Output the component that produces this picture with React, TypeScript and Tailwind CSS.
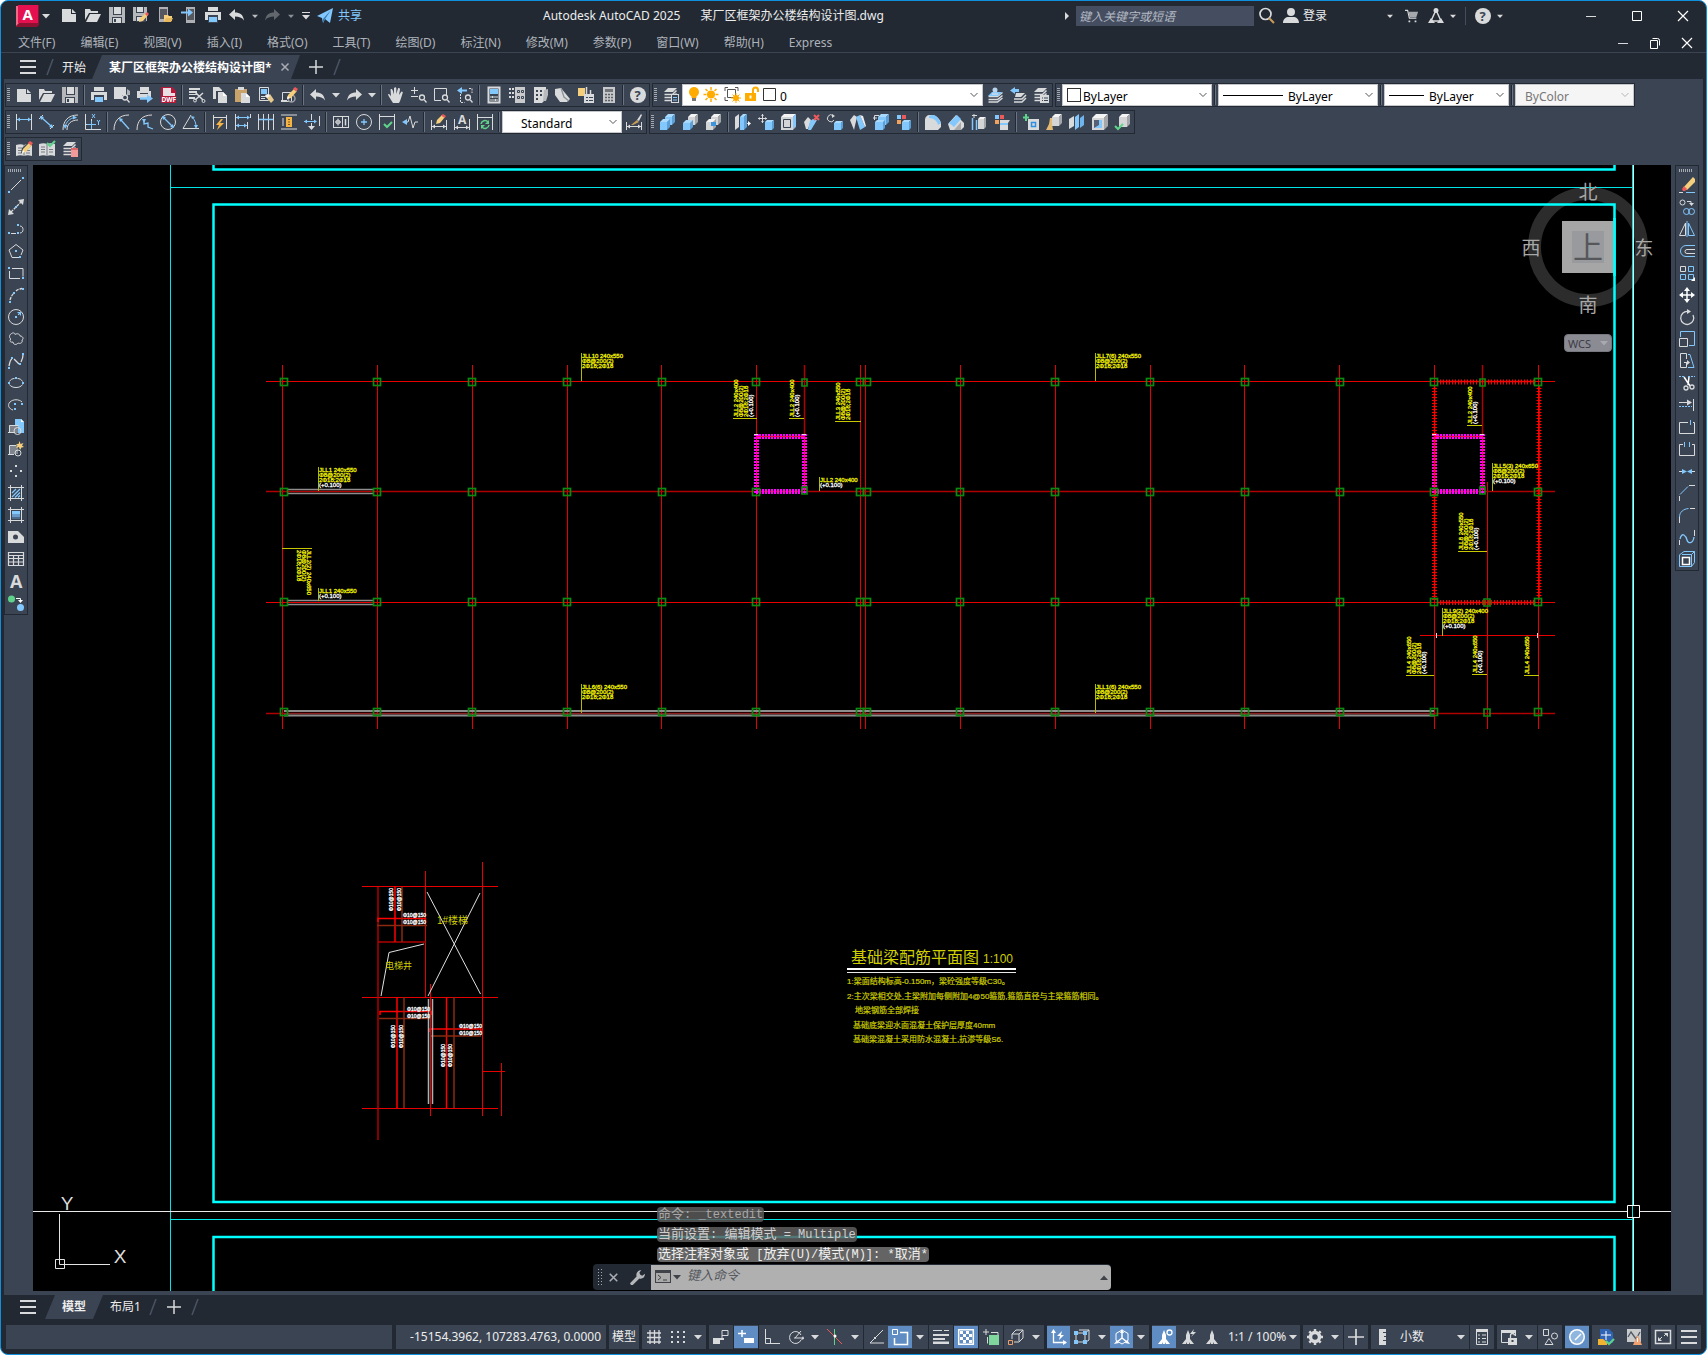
import React from "react";

/* ---------- icon primitives ---------- */

const W = "#d9dadb";
const B = "#83c8fd";
const G = "#9a9da3";
const BG = "#3b4453";
const Y = "#f6cf7d";
const R = "#ee5a5a";
const GR = "#5fd38a";

type Shape = { d?: string; c: string; w: number; t?: string; x?: number; y?: number; s?: number; dash?: string };
const S = (d: string, c = W, w = 1, dash?: string): Shape => ({ d, c, w, dash });
const F = (d: string, c = W): Shape => ({ d, c, w: 0 });
const T = (t: string, x: number, y: number, s: number, c = W): Shape => ({ t, x, y, s, c, w: 0 });
const dot = (x: number, y: number, c = B) => F(`M${x - 1} ${y - 1}h2v2h-2z`, c);

const cube = (x: number, y: number, w: number, h: number, d: number, blue = false): Shape[] => {
  const [f, t, s] = blue ? ["#83c8fd", "#a9d9fd", "#5b9fd6"] : ["#d4d5d6", "#f4f4f4", "#a4a6a9"];
  return [
    F(`M${x} ${y + d}h${w}v${h}h${-w}z`, f),
    F(`M${x} ${y + d}l${d} ${-d}h${w}l${-d} ${d}z`, t),
    F(`M${x + w} ${y + d}l${d} ${-d}v${h}l${-d} ${d}z`, s),
  ];
};
const pencil: Shape[] = [F("M6 12l1-4 6-6 3 2-6 7z", Y), F("M12 2l2-2 3 2-2 2.500z", R), F("M6 12l.8-3 2 2z", "#fff")];
const sheets: Shape[] = [F("M5 1h9l-4 4H1z"), S("M1.500 7.500h8l4-4M1.500 10.500h8l4-4M1.500 13.500h8l4-4", W, 1.5)];
const magnifier: Shape[] = [S("M8.500 10.500a2.500 2.500 0 1 0 5 0a2.500 2.500 0 1 0-5 0M13 12.500l2.500 3", W, 1.3)];
const redUp: Shape[] = [F("M1 1h4v4H1z", B), F("M6 1h4v4H6z", R), F("M1 6h4v4H1z", "#f3a25b")];
const anno: Shape[] = [F("M8 1l2 5v4l4 5h-4l-1-2v2H7v-2l-1 2H2l4-5V6z")];

const icons: Record<string, Shape[]> = {
  new: [F("M1 2h9v5h5v8H1z"), F("M11 2l4 4h-4z")],
  open: [F("M0 13V2h5l1 2h7v2H4z"), F("M5 7h11l-4 8H1z")],
  save: [F("M0 0h16v16H0z", "#b6b8bb"), F("M4 0h9v8H4z", BG), F("M5 0h7v7H5z"), F("M3 10h10v6H3z", BG), F("M4 11h8v5H4z"), F("M5 12h2v3H5z", BG)],
  saveAs: [F("M0 0h14v14H0z", "#b6b8bb"), F("M3 0h8v6H3z", BG), F("M4 0h6v5H4z"), F("M3 9h10v6H3z", BG), F("M4 10h6v4H4z"), F("M6 15l1-4 6-5 2 2-5 6z", Y), F("M12 7l2-2 2 2-2 2z", R)],
  openPhone: [F("M2 0h9v15H2z", "#aeb0b3"), F("M3 2h7v10H3z", "#55585e"), F("M7 8h4l1 1h3v5H7z", Y), F("M9 11h7l-2 4H7z", "#e8b85d")],
  savePhone: [F("M5 0h9v16H5z", "#aeb0b3"), F("M6 2h7v11H6z", "#55585e"), S("M0 5.500h8", B, 2), F("M7 1.500l5 4-5 4z", B)],
  print: [F("M3 0h10v4H3z"), F("M0 5h16v8H0z"), F("M3 8h10v1H3z", BG), F("M3 9h10v7H3z", BG), F("M4 10h8v5H4z", B)],
  undo: [F("M0 7.500L6 2v3.500c5 0 8 2 9 8-2-3-5-4-9-4V13z")],
  redo: [F("M16 7.500L10 2v3.500c-5 0-8 2-9 8 2-3 5-4 9-4V13z")],
  plane: [F("M0 8L16 0l-3 15-5-4-2 4-1-5z", B), F("M6 11l8-9-6 9-2 4z", "#3478ad")],
  preview: [F("M0 0h12v8H0z"), F("M3 8h5v4H0V8z"), ...magnifier, F("M13 2l3 2v4h-3z", "#b0b3b6")],
  publish: [F("M3 0h9v4H3z"), F("M0 4h14v7H0z"), F("M3 6h8v1H3z", BG), S("M3 11.500h9", B, 2.5), F("M10 7.500l6 4-6 4.500z", B)],
  dwf: [F("M1 0h11l4 4v12H1z", "#b8173a"), F("M3 1h8v5h4v3H3z", "#eadfe2"), T("DWF", 1.5, 15, 6.5, "#fff")],
  cut: [F("M0 1h11v2H0zM0 4h8v2H0zM0 7h9v1H0zM0 10h6v2H0z"), S("M6 5l8 8M14 6l-8 7", W, 1.5), S("M4.500 13.500a1.500 1.500 0 1 0 3 0a1.500 1.500 0 1 0-3 0M13 14a1.500 1.500 0 1 0 3 0a1.500 1.500 0 1 0-3 0")],
  copy: [F("M1 0h6l3 3v1H4v8H1z"), F("M6 5h5l4 4v7H6z"), F("M11 5l4 4h-4z", "#fff")],
  paste: [F("M0 2h12v4H7v9H0z", "#c9a36a"), F("M3 0h6v3H3z"), F("M6 6h5l4 4v6H6z"), F("M11 6l4 4h-4z", "#fff")],
  match: [S("M1.500 .5h9v13h-9z"), F("M3 2h6v5H3z", B), S("M3 9.500h6M3 11.500h4"), F("M8 10l4-3 4 6-3 3z", "#e8c98d"), F("M7 8l3-1 2 2-3 2z", "#f1f1f1")],
  blockEdit: [S("M1.500 14.500v-9h9v9z"), F("M0 13h6v2H0z"), S("M7 11.500a3.500 3.500 0 1 0 7 0a3.500 3.500 0 1 0-7 0", G, 1.5), ...pencil],
  pan: [F("M5 16C3 13 1 10 0 7.500c1-1 2 0 3 2L2.500 2.500c1-1 2 0 2.300 1L6 7.500V1c1-1 2-1 2.300 0v6L10 1.500c1-1 2 0 2 1L11 8l2.500-3.500c1.500 0 1.500 1 1 2-1 3-2 7-3.500 9.500z")],
  zoomRt: [S("M3.500 0v7M0 3.500h7M0 9.500h7"), ...magnifier],
  zoomWin: [S("M.5 1.500h12v12H.5z"), F("M7 8h9v8H7z", BG), ...magnifier],
  zoomPrev: [S("M3.500 7v8.500h4M12 1.500h3V6", W, 1, "2 1"), F("M0 3.500L5 0v2.500h5v2H5V7z", B), ...magnifier],
  props: [S("M2.500 .5h11v15h-11z", W, 2), F("M4 2h8v5H4z", B), S("M4 10h8M4 13h8M6.500 9v2M9.500 12v2")],
  dcenter: [F("M0 1h2v2H0zM0 5h2v2H0zM0 9h2v2H0zM3 1h2v2H3zM3 5h2v2H3zM3 9h2v2H3z"), F("M6 0h10v16H6z", "#c9cacc"), S("M8.500 3.500h2v2h-2zM12.500 3.500h2v2h-2zM8.500 9.500h2v2h-2zM12.500 9.500h2v2h-2z", BG)],
  palettes: [F("M2 0h12v12l-4 4H2z"), F("M4 3h2v2H4zM8 3h2v2H8zM4 7h2v2H4zM8 7h2v2H8zM4 11h2v2H4z", BG), F("M12 3l4-1v6l-2 6h-3z", "#b8babd")],
  sheets: [F("M0 2l6-1 9 11-3 3H5L0 8z"), S("M6 1l3 9 5 4", "#8e9196", 1.3)],
  markup: [F("M0 1h7v8H0z", Y), S("M8.500 0v8M12.500 3v5", W, 1.5), F("M6 7h10v9H6z"), S("M8 10.500h2M11 10.500h4M8 13.500h2M11 13.500h4", BG)],
  calc: [F("M2 0h12v16H2z", "#c7c8ca"), F("M4 2h8v3H4z", "#72757b"), S("M4 7.500h8M4 10.500h8M4 13.500h8", "#5b5f67", 1.5, "2 1")],
  help: [F("M0 8a8 8 0 1 0 16 0a8 8 0 1 0-16 0"), T("?", 4.5, 12.5, 13, "#3b4453")],
  layerProps: [...sheets, F("M8 7h8v9H8z"), F("M9 8h6v7H9z", BG), S("M10 10.500h4M10 13h4", B)],
  layerCur: [S("M1.500 9.500h9l5-4M1.500 12.500h9l5-4M1.500 15h9l5-4", W, 1.5), F("M5 5h10l-4 4H1z", B), F("M5.500 3a2.500 2.500 0 1 0 5 0a2.500 2.500 0 1 0-5 0M5 6h6v2H5z", "#b9d6ee")],
  layerPrev: [F("M0 3.500L5 0v2h4v3H5v2z", B), F("M6 6h9l-4 4H5z"), S("M4 12h8l4-4M4 15h8l4-4", W, 1.5)],
  layerStates: [...sheets, F("M7 8h9v8H7z"), S("M9 11h1M11 11h4M9 13.500h1M11 13.500h4", BG)],
  dLinear: [S("M.5 0v16M15.500 0v16"), S("M1 5.500h14", B), F("M1 5.500l3-2v4zM15 5.500l-3-2v4z", B)],
  dAligned: [S("M0 5l4-4M11 15l4-4"), S("M3 4l9 8", B, 1.3), F("M1 2l4 1-3 3zM14 14l-4-1 3-3z", B)],
  dArc: [S("M1 16C1 7 6 1 16 1M5 16c0-6 4-10 11-10"), S("M3 13C4 8 8 4 13 3.500", B), F("M15 3.500l-4-2v4zM3 15l-1.500-4h4z", B)],
  dOrd: [S("M.5 0v15.500H16M6.500 5v10M1 10.500h8"), S("M6.500 7v8M2 10.500h9", B), S("M7 0l3 4M10 0L7 4M12 6l1.500 2L15 6M13.500 8v3", B)],
  dRadius: [S("M0 16C0 7 5 1 15 1"), S("M7 6l8 9", B, 1.3), F("M5 4l4 1-3 3z", B)],
  dJog: [S("M0 16C0 7 5 1 15 1"), S("M7 6v4l4-1v4l5 2", B, 1.3), F("M5 5l4 0-2 4z", B)],
  dDia: [S("M.5 8a7.500 7.500 0 1 0 15 0a7.500 7.500 0 1 0-15 0"), S("M3 3l10 10", B, 1.3), F("M2 2l4 1-3 3zM14 14l-4-1 3-3z", B)],
  dAng: [S("M8 1L0 14.500h16"), S("M9 3c3 3 4 6 4 10", B), F("M8 2l4 1-3 2zM13 15l-2-4h4z", B)],
  dQuick: [S("M1.500 1v14M14.500 1v14M2 3.500h12"), F("M9 5L4 11h3l-2 5 7-7H8l3-4z", "#f5b445")],
  dBase: [S("M.5 0v16M15.500 0v4M12.500 8v7"), S("M1 3.500h13M1 11.500h11", B), F("M15 3.500l-3-2v4zM12 11.500l-3-2v4zM1 3.500l3-2v4zM1 11.500l3-2v4z", B)],
  dCont: [S("M.5 0v16M5.500 0v16M10.500 0v16M15.500 0v16"), S("M1 5.500h14", B, 1.5)],
  dSpace: [S("M0 1h16M0 15h16M2 4v8"), F("M5 3h6v10H5z", "#f5b445"), S("M7 5.500h2M7 8h2M7 10.500h2", "#7a5a20")],
  dBreak: [S("M7.500 0v6M7.500 9v6M15.500 2v10"), S("M0 7.500h12", B), F("M0 7.500l3-2v4zM13 7.500l-3-2v4z", B), F("M4 12h7l-3.500 4z")],
  tol: [F("M0 2h16v12H0z"), F("M1 3h8v10H1zM10 3h5v10h-5z", BG), S("M2 8h6M5 4.500v7M3 8a2 2 0 1 0 4 0a2 2 0 1 0-4 0"), S("M12.500 5v6.500", W, 1.5)],
  center: [S("M.5 8a7.500 7.500 0 1 0 15 0a7.500 7.500 0 1 0-15 0"), S("M5 8h6M8 5v6", B, 1.3)],
  inspect: [S("M.5 0v16M15.500 0v16M1 2.500h14"), S("M5 10l3 3 5-5", GR, 2)],
  jogline: [S("M4 8h2l2-6 3 12 2-6h3"), F("M0 8l5-3v6z", B)],
  dEdit: [S("M.5 6v10M15.500 6v10M1 12.500h14"), F("M1 12.500l3-2v4zM15 12.500l-3-2v4z"), F("M5 10l1-4 5-5 3 2-5 6z", Y), F("M10 1.500L12 0l3 2-1.500 2z", R)],
  dText: [S("M.5 5v11M15.500 5v11M1 13.500h14"), F("M1 13.500l3-2v4zM15 13.500l-3-2v4z"), T("A", 4, 10, 12)],
  dUpdate: [S("M.5 0v16M15.500 0v16M1 3.500h14"), S("M4 10a4 4 0 0 1 7-2M12 11a4 4 0 0 1-7 2", GR, 1.5), F("M12 6v4H8zM4 15v-4h4z", GR)],
  dStyle: [S("M.5 8v8M15.500 8v8M1 12.500h14"), F("M1 12.500l3-2v4zM15 12.500l-3-2v4z"), F("M5 11l6-5 2 2-6 3z", "#c79b5a"), F("M11 6l4-6 1 1-3 6z")],
  union: [...cube(5, 0, 7, 8, 3, true), ...cube(0, 5, 7, 8, 3, true)],
  subtract: [...cube(5, 0, 7, 8, 3), ...cube(0, 6, 7, 7, 3, true)],
  intersect: [...cube(5, 0, 7, 8, 3), ...cube(0, 5, 7, 8, 3), F("M5 8h5v4H5z", "#3a95dd")],
  extrude: [F("M0 3l4-3v13l-4 3z"), ...cube(5, 0, 4, 13, 3, true), S("M12 9.500h3"), F("M13 7l3 2.500-3 2.500z", "#fff")],
  moveF: [S("M4.500 0v9M0 4.500h9"), F("M3 2h3L4.500 0zM3 7h3L4.500 9zM2 3v3L0 4.500zM7 3v3l2-1.500z"), ...cube(7, 6, 7, 8, 2, true)],
  offsetF: [...cube(0, 0, 12, 13, 3), S("M2.500 5.500h7v8h-7z", BG), F("M12 3l3-3v12l-3 3z", B)],
  deleteF: [F("M0 8l4-5 3 3-3 9H2z"), F("M6 7l3-2 4 1-6 10H4z", B), S("M10 1l5 5M15 1l-5 5", R, 2)],
  rotateF: [S("M6 1.500A3.500 3.500 0 1 0 7 6"), F("M5 0l3 2-3 2z"), ...cube(7, 7, 7, 7, 2, true)],
  taperF: [F("M0 6l4-5 3 2-3 13z"), F("M6 3l4-2 5 12-5 3z", B), F("M10 1l3 1 3 10-1 1z", "#eee")],
  copyF: [...cube(5, 0, 8, 8, 3, true), S("M1.500 6V1.500H6M0 4h4"), ...cube(2, 6, 8, 8, 2, true)],
  colorF: [...redUp, ...cube(6, 6, 7, 8, 2, true)],
  filletE: [F("M0 16V6c0-3 2-5 5-5h3c4 1 8 5 8 9v3l-3 3z"), F("M4 2c3-2 7-1 9 2l3 5-3 2c-1-4-4-7-9-7z", B)],
  chamferE: [F("M0 10L8 1l8 8v4l-3 3H2z"), F("M1 9l8-8 4 4-7 8z", B), F("M6 16l7-8v8z", "#aaa")],
  copyE: [S("M1.500 16V4M5.500 16V6", B, 1.5), S("M1 1.500h5M3 0v4"), ...cube(7, 3, 6, 10, 2)],
  colorE: [...redUp, F("M6 6h10l-2 3H6z"), F("M6 9h8v2H6z", B), F("M6 11h8v5H6z")],
  imprint: [S("M3 0v7M0 3.500h6", GR, 2), F("M5 5h11v11H5z"), S("M8.500 8.500h4v4h-4z", "#2f8fe0", 1.5)],
  clean: [...cube(6, 0, 7, 9, 3), F("M4 4l-1 6-3 6h7l-1-6V4z", "#e3b873")],
  separate: [F("M0 5l5-3v10l-5 3z"), F("M6 3l4-3v13l-4 3z", B), F("M11 4l4-3v10l-4 3z", "#6eb5ee")],
  shell: [...cube(0, 0, 12, 12, 4), F("M2 6h8v8H2z", "#566173"), F("M2 14l5-3V6h3v8z", B)],
  check: [...cube(4, 0, 8, 10, 3), S("M0 12l3 3 5-5", GR, 2)],
  attEdit: [F("M0 4c3-1 6-1 8 0 2-1 5-1 8 0v11c-3-1-6-1-8 0-2-1-5-1-8 0z"), S("M2 7h4M2 9.500h4M2 12h4M10 9.500h4M10 12h4M8 4v11", "#777b82"), F("M5 12l1-5 7-6 3 3-7 7z", "#3b4453"), ...pencil],
  attSync: [F("M0 3c3-1 6-1 8 0 2-1 5-1 8 0v12c-3-1-6-1-8 0-2-1-5-1-8 0z"), S("M2 6h4M2 8.500h4M2 11h4M10 8.500h4M10 11h4M8 3v12", "#777b82"), S("M8 2l3 3 5-5", GR, 2)],
  layerBook: [...sheets, F("M9 7h7v9H9z", "#f29a9a"), F("M9 7h7v2H9z", "#d66")],

  line: [S("M3 13L13 3"), dot(1, 15), dot(15, 1)],
  xline: [S("M3 13L13 3", W, 1.3, "3 1"), F("M0 16l1-6 5 5zM16 0l-6 1 5 5z"), dot(8, 8)],
  pline: [S("M3 12.500h5M12 5c4 0 4 7 0 7"), dot(1, 12), dot(10, 4), dot(10, 12)],
  polygon: [S("M11 14.500H4L1 7l7-5.500L15 7l-2 5"), dot(8, 8), dot(12, 14)],
  rect: [S("M4 3.500h11v8M12 13.500H1.500V6"), dot(1, 3), dot(15, 13)],
  arc: [S("M2 13c1-3 2-5 4-7M8 4c2-2 4-2 6-2.500", W, 1.3, "3 1"), dot(2, 15), dot(6, 6), dot(15, 2)],
  circle: [S("M.5 8a7.500 7.500 0 1 0 15 0a7.500 7.500 0 1 0-15 0"), S("M10 6l2-2", B), F("M13 3v4l-4-4z", B), dot(8, 8)],
  cloud: [S("M3 3c2-2 4-1 4 .5C9 2 12 3 12 5c3 0 4 3 2 4 1 3-2 4-4 3-1 2-5 2-5-1-3 1-4-2-2-3-2-1-2-4 0-5z")],
  spline: [S("M1 13c1-5 2-7 3-7M6 6l5 5M13 9c1-2 2-4 2-7", W, 1.3), dot(1, 15), dot(4, 5), dot(12, 11), dot(15, 1)],
  ellipse: [S("M1.500 6.500c1-2 3-3 5-3M9.500 3.500c2 0 4 1 5 3M1.500 9.500c2 4 11 4 13 0"), dot(8, 3), dot(1, 8), dot(15, 8)],
  earc: [S("M5 13C1 12-1 8 2 5s9-3 12 0"), dot(7, 7), dot(14, 7), dot(7, 12)],
  insert: [F("M7 0h6l3 3v11H7z", B), F("M13 0l3 3h-3z", "#fff"), F("M1 6h9v8H1z", "#7f858f"), S("M1.500 13V6.500h9M0 13.500h6"), S("M6 12a3.500 3.500 0 1 0 7 0a3.500 3.500 0 1 0-7 0")],
  block: [F("M1 5h9v8H1z", "#7f858f"), S("M1.500 13V4.500h7M0 13.500h6"), S("M7 12a3 3 0 1 0 6 0a3 3 0 1 0-6 0"), F("M11.500 0l1 3 3-1-1.500 2.500L16 6l-2.500.5L12 9l-1-3-3 1 1.500-2.500L8 3l2.500 0z", Y)],
  point: [dot(8, 3, W), dot(3, 8, W), dot(13, 8, W), dot(8, 13, W)],
  hatch: [S("M2.500 0v16M13.500 0v16M0 2.500h16M0 13.500h16"), S("M4 8l4-4M4 12l8-8M7 12.500l5-5M10 12.500l2-2", B, 1.3)],
  gradient: [S("M2.500 0v16M13.500 0v16M0 2.500h16M0 13.500h16"), F("M4 4h8v3H4z", B), F("M4 7h8v3H4z", "#6a9bc8"), F("M4 10h8v2H4z", "#4c6a8b")],
  region: [F("M0 2h10l6 6v6H0z"), F("M5 8a2.500 2.500 0 1 0 5 0a2.500 2.500 0 1 0-5 0", BG)],
  table: [S("M.5 1.500h15v13H.5zM.5 4.500h15M.5 7.500h15M.5 11h15M5.500 4.500v10M10.500 4.500v10", W, 1.2)],
  textA: [T("A", 2, 14.5, 18)],
  addsel: [F("M0 4a3.500 3.500 0 1 0 7 0a3.500 3.500 0 1 0-7 0", GR), S("M8 3.500h4.500V6", "#fff"), F("M10 5h5l-2.500 3z", "#fff"), F("M9 12.500a3.500 3.500 0 1 0 7 0a3.500 3.500 0 1 0-7 0", B)],

  erase: [F("M4 11L14 0l2 2v3L8 13z", Y), F("M3 12l2-3 3 3-2 2H4z", R), S("M0 15.500h4"), S("M7 15.500h9", B)],
  copyO: [S("M1 3.500a2.500 2.500 0 1 0 5 0a2.500 2.500 0 1 0-5 0M8 2.500h4V5"), F("M10 4h5l-2.500 3z"), S("M4.500 12.500a3 3 0 1 0 6 0a3 3 0 1 0-6 0M9.500 12.500a3 3 0 1 0 6 0a3 3 0 1 0-6 0", B)],
  mirror: [S("M6.500 2v12.500h-6z"), S("M9.500 2v12.500h6zM8 0v16", B)],
  offset: [S("M16 2.500H7a5.500 5.500 0 0 0 0 11h9", B), S("M16 6.500H8a2 2 0 0 0 0 4h8")],
  array: [S("M1.500 1.500h5v5h-5z"), S("M9.500 1.500h5v5h-5zM1.500 9.500h5v5h-5zM9.500 9.500h5v5h-5z", B), F("M16 12v4h-4z", "#fff")],
  move: [S("M8 2v12M2 8h12", "#fff", 1.5), F("M8 0l3 4H5zM8 16l3-4H5zM0 8l4-3v6zM16 8l-4-3v6z", "#fff")],
  rotate: [S("M9 2.500A6.500 6.500 0 1 0 14 6", W, 1.3), F("M8 0l4 2.500L8 5z")],
  scale: [S("M1.500 6V.5h14v14H10", B), S("M.5 7.500h8v8h-8z")],
  stretch: [S("M7.500 10v4.500h-6v-14h6V6M5 9.500h4"), F("M8 7l3 2.500L8 12z"), S("M9 1.500h2l4 13H9", B)],
  trim: [S("M0 1.500h6M9 1.500h7", B, 1, "2 1"), S("M5 2l6 9M10 2l-1 8", "#fff", 1.5), S("M5 13a2 2 0 1 0 4 0a2 2 0 1 0-4 0M11 12a2 2 0 1 0 4 0a2 2 0 1 0-4 0", W, 1.3)],
  extend: [S("M14.500 2v12M0 5.500h9"), F("M8 2.500l5 3-5 3z"), S("M0 9.500h13", B, 1, "2 1")],
  breakPt: [S("M9 3.500H.5v11h15v-11H14"), S("M11.500 1v5", B)],
  break: [S("M4 3.500H.5v11h15v-11H13"), S("M5.500 1v5M10.500 1v5", B)],
  join: [S("M0 8.500h5M11 8.500h5"), F("M3 6l5 2.500L3 11zM13 6L8 8.500l5 2.500z", B)],
  chamfer: [S("M.5 16v-5M10 .5h6"), S("M1 9.500L9 1.500", B)],
  fillet: [S("M.5 16v-6M11 1.500h5"), S("M.5 10c0-5 4-8 9-8.500", B)],
  blend: [S("M.5 16v-5M15.500 1v6"), S("M1 10c2-8 6-3 7 1s6 4 7-3", B, 1.3)],
  explode: [S("M3.500 6.500h7v7h-7z", "#fff", 1.5), S("M.5 3.500v12h12M1 3.500L5 .5h10.500v11l-3 4M3 3.500h9.500l3-3M12.500 3.500v12", B)],

  grid: [S("M4 1v14M8.500 1v14M13 1v14M1 4h14M1 8.500h14M1 13h14", W, 1.3)],
  dots: [2, 8, 14].flatMap((x) => [3, 8, 13].map((y) => dot(x, y, W))),
  infer: [S("M9 10.500V1.500h6v5H9"), F("M0 9h7v6H0z"), F("M7 9h4v2H7z")],
  dyn: [S("M4 1v7M0 4.500h8", "#fff", 1.5), F("M6 9h10v5H6z", "#fff")],
  ortho: [S("M1.500 0v14.500H16M1.500 9.500h5v5")],
  polar: [S("M13 6a6 6 0 1 0 0 5M6 9h10M7 9l6-7"), F("M13 11l3-1-1-3z")],
  iso: [S("M7.500 0v16", GR), S("M0 0l15 15", R), F("M6.500 7a1.500 1.500 0 1 0 3 0a1.500 1.500 0 1 0-3 0", "#fff")],
  otrack: [S("M15 1L2 14h14"), dot(7, 9, W)],
  osnap: [S("M8 3.500h7.500v12H2.500V9", "#fff", 1.5), S("M.5 .5h5v5h-5z", "#fff")],
  lw: [F("M0 1h9v1H0zM11 1h5v1h-5zM0 5h16v2H0zM0 9h12v2H0zM0 12.500h16v2.500H0z")],
  transp: [S("M.7 .7h14.600v14.600H.7z", "#fff", 1.5), F("M2 2h3v3H2zM8 2h3v3H8zM5 5h3v3H5zM11 5h3v3h-3zM2 8h3v3H2zM8 8h3v3H8zM5 11h3v3H5zM11 11h3v3h-3z", "#fff")],
  selcyc: [S("M3 0v6M0 3h6"), S("M4.500 8v6.500M8 3.500h7V6"), F("M6 6h10v10H6z", "#7fd79e")],
  osnap3: [S("M4 10V5l4-4h7v8l-4 4H6M4 5h7v7M11 5l4-4"), S("M.5 11.500h4v4h-4z", "#f2a06b")],
  ducs: [S("M2.500 2v11.500H15", "#fff", 1.3), F("M2.500 0L5 4H0zM16 13.500L12 11v5z", "#fff"), F("M11 2L6 7h3l-1 4 5-5h-3z", "#fff")],
  filter: [S("M2 4h9v9H2zM5 1h10v10l-3 2M11 4l4-3"), F("M0 2h4v4H0zM9 2h4v4H9zM0 11h4v4H0zM9 11h4v4H9z", B)],
  gizmo: [S("M8 1l6 3.500v7L8 15l-6-3.500v-7z", "#fff"), S("M8 3v6l5 4M8 9l-5 4", "#fff", 1.5), F("M8 0l2 4H6zM16 15l-5-1 2-3zM0 15l5-1-2-3z", "#fff")],
  annoVis: [...anno.map((s) => ({ ...s, c: "#fff" })), S("M11 3.500a2.500 2.500 0 1 0 5 0a2.500 2.500 0 1 0-5 0", "#fff", 1.3)],
  annoAuto: [...anno, F("M14 0l-4 5h3l-2 3 5-5h-3z")],
  annoScale: anno,
  gear: [S("M3.500 8a4.500 4.500 0 1 0 9 0a4.500 4.500 0 1 0-9 0", W, 3.5), S("M8 0v3M8 13v3M0 8h3M13 8h3M2.300 2.300l2 2M11.700 11.700l2 2M13.700 2.300l-2 2M4.300 11.700l-2 2", W, 2.5)],
  plus: [S("M8 0v16M0 8h16", W, 1.7)],
  ruler: [F("M4 0h7v3H8v1h3v3H9v1h2v3H8v1h3v4H4z")],
  qprops: [S("M2.500 .5h11v15h-11z"), F("M2 0h12v3H2z"), S("M4 6h2M8 6h4M4 9.500h2M8 9.500h4M4 13h2M8 13h4")],
  lockui: [S("M7 13.500H.5v-12h14V7"), F("M0 1h15v3H0z"), F("M7 9h9v7H7z"), S("M9.500 9V6.500a2 2 0 0 1 4 0", W, 1.3), dot(11.5, 12, BG)],
  isolate: [S("M1.500 .5h5v6h-5zM9.500 7a3 3 0 1 0 6 0a3 3 0 1 0-6 0M7 9.500l4 6H3z")],
  perf: [F("M0 8a8 8 0 1 0 16 0a8 8 0 1 0-16 0", "#fff"), F("M1.500 8a6.500 6.500 0 1 0 13 0a6.500 6.500 0 1 0-13 0", "#8fb6de"), S("M6 11l6-6", "#fff", 1.5)],
  cadcheck: [F("M2 0h9l4 4v10H2z", "#2f64b5"), S("M8 2v9M3 6h10", "#fff"), F("M0 10h5l4 3v3H0z", "#f0b432"), S("M8 12l3 3 5-5", GR, 2)],
  trend: [F("M1 0h14v13H1z", "#c9cacb"), S("M2 8l3-5 5 7 4-7", "#4e5866", 1.3), F("M11.500 6L16 16H7z", "#f2a271"), S("M11.500 9v4", "#fff")],
  fullscreen: [S("M.5 1.500h15v13H.5z", W, 1.5), S("M4 11l3-3M9 7l3-3"), F("M3 12V8l4 4zM13 4v4L9 4z")],
  menu: [S("M0 2h16M0 8h16M0 14h16", W, 2)],
  search: [S("M1 6a5.500 5.500 0 1 0 11 0a5.500 5.500 0 1 0-11 0", W, 1.7), S("M10 10l5 5", "#c79b5a", 2)],
  user: [F("M4 4a4 4 0 1 0 8 0a4 4 0 1 0-8 0M0 15c0-5 4-6 5-6h6c1 0 5 1 5 6z")],
  cart: [S("M0 1.500h3l2 9h8", W, 1.3), F("M4 3h11l-2 6H5z", "#a6a8ab"), F("M4 13h2v2H4zM11 13h2v2h-2z")],
  autodesk: [S("M8 2L3 13M8 2l5 11M3 13h10", W, 1.5), F("M5.500 2.500a2.500 2.500 0 1 0 5 0a2.500 2.500 0 1 0-5 0M0 15l3-5 4 5zM16 15l-3-5-4 5z")],
  min: [S("M3 8.500h10", W)],
  max: [S("M3.500 3.500h9v9h-9z", "#fff")],
  restore: [S("M3.500 5.500h7v8h-7zM5.500 3.500h5a2 2 0 0 1 2 2v5", "#fff")],
  close: [S("M3 3l10 10M13 3L3 13", "#fff", 1.2)],
  closeTab: [S("M4 4l8 8M12 4l-8 8", "#a9adb3", 1.7)],
  wrench: [F("M0 14l7-7c-1-4 2-7 5-7l-2 3 1 2 2 1 3-2c0 4-3 6-6 5l-7 7-2 0z", "#b4b6b9")],
  prompt: [F("M0 1h16v13H0z", "#3f4248"), F("M1 4h14v9H1z", "#a9a9a9"), S("M3 6l3 2.500L3 11M8 11h4", "#3f4248")],
};

function Icon({ name, size = 16, className = "" }: { name: string; size?: number; className?: string }) {
  return (
    <svg viewBox="0 0 16 16" width={size} height={size} className={`shrink-0 overflow-visible ${className}`} aria-hidden="true">
      {(icons[name] ?? []).map((s, i) =>
        s.t ? (
          <text key={i} x={s.x} y={s.y} fontSize={s.s} fill={s.c} fontWeight="700" fontFamily="Open Sans, sans-serif">
            {s.t}
          </text>
        ) : (
          <path key={i} d={s.d} fill={s.w ? "none" : s.c} stroke={s.w ? s.c : "none"} strokeWidth={s.w || undefined} strokeDasharray={s.dash} />
        ),
      )}
    </svg>
  );
}

/* ---------- toolbar pieces ---------- */

function Caret({ className = "text-[#d9dadb]", size = 8 }: { className?: string; size?: number }) {
  return (
    <svg viewBox="0 0 8 5" width={size} height="5" className={`shrink-0 ${className}`} aria-hidden="true">
      <path d="M0 0h8L4 4.500z" fill="currentColor" />
    </svg>
  );
}

function Chevron({ className = "text-[#555]" }: { className?: string }) {
  return (
    <svg viewBox="0 0 8 6" width="8" height="6" className={`pointer-events-none shrink-0 ${className}`} aria-hidden="true">
      <path d="M.5 1l3.500 3.500L7.500 1" fill="none" stroke="currentColor" />
    </svg>
  );
}

function Grip({ vertical = false }: { vertical?: boolean }) {
  return vertical ? (
    <div className="flex h-2 items-center px-[3px]">
      <div className="h-[3px] w-[14px] bg-[repeating-linear-gradient(90deg,#a5aab2_0_1px,transparent_1px_2px)]" />
    </div>
  ) : (
    <div className="flex w-[6px] shrink-0 items-center pl-px">
      <div className="h-[14px] w-[3px] bg-[repeating-linear-gradient(180deg,#a5aab2_0_1px,transparent_1px_2px)]" />
    </div>
  );
}

function Tools({ list }: { list: string }) {
  return (
    <>
      {list.split(" ").map((n, i) => {
        if (n === "|")
          return (
            <div key={i} className="flex h-5 w-[6px] shrink-0 justify-center">
              <div className="w-0.5 border-l border-[#222933] bg-[#6b7482]" />
            </div>
          );
        if (n === "v")
          return (
            <button key={i} aria-label="history" className="flex h-5 w-[13px] shrink-0 items-center justify-center">
              <Caret />
            </button>
          );
        return (
          <button key={i} aria-label={n} className="flex h-[22px] w-[23px] shrink-0 items-center justify-center hover:bg-[#55617a]">
            <Icon name={n} />
          </button>
        );
      })}
    </>
  );
}

function Bar({ children, className = "" }: { children: React.ReactNode; className?: string }) {
  return <div className={`flex h-6 shrink-0 items-center border border-[#222933] ${className}`}>{children}</div>;
}

function Combo({ label, value, className, pad, sample, muted = false }: { label: string; value: string; className: string; pad: string; sample?: React.ReactNode; muted?: boolean }) {
  return (
    <div className={`relative flex h-[22px] shrink-0 items-center border border-[#c4c6c9] ${muted ? "bg-[#f5f5f5] text-[#777]" : "bg-white text-black"} ${className}`}>
      <select aria-label={label} disabled={muted} defaultValue={value} className={`h-full w-full appearance-none bg-transparent pt-0.5 text-[12px] leading-5 outline-none ${pad}`}>
        <option>{value}</option>
      </select>
      {sample && <div className="pointer-events-none absolute inset-y-0 left-1 flex items-center">{sample}</div>}
      <Chevron className={`absolute right-1 ${muted ? "text-[#b5b5b5]" : "text-[#555]"}`} />
    </div>
  );
}

function VerticalBar({ list }: { list: string }) {
  return (
    <div className="flex w-6 flex-col border border-[#222933]">
      <Grip vertical />
      {list.split(" ").map((n) => (
        <button key={n} aria-label={n} className="flex h-[22px] items-center justify-center hover:bg-[#55617a]">
          <Icon name={n} />
        </button>
      ))}
    </div>
  );
}

/* ---------- title, menu, tabs ---------- */

function TitleBar() {
  const quick = ["new", "open", "save", "saveAs", "openPhone", "savePhone", "print"];
  return (
    <div className="relative flex h-[30px] items-center">
      <button aria-label="application menu" className="ml-[14px] flex w-9 items-center gap-[3px]">
        <svg viewBox="0 0 24 22" width="24" height="22" aria-hidden="true">
          <path d="M1 2l2-2h21v20l-2 2H1z" fill="#8d1130" />
          <path d="M1 1h3v17l-3 3z" fill="#ee6b85" />
          <path d="M3 0h20v18H3z" fill="#e51050" />
          <text x="7.500" y="15" fontSize="15" fontWeight="700" fill="#fff" fontFamily="Open Sans, sans-serif">A</text>
        </svg>
        <Caret />
      </button>
      <div className="ml-[6px] flex">
        {quick.map((n) => (
          <button key={n} aria-label={n} className="flex w-6 justify-center">
            <Icon name={n} />
          </button>
        ))}
        <button aria-label="undo" className="flex w-6 justify-center"><Icon name="undo" /></button>
        <button aria-label="undo list" className="flex w-[11px] items-center justify-center"><Caret size={6} className="text-[#b9bcc0]" /></button>
        <button aria-label="redo" className="flex w-6 justify-center opacity-35"><Icon name="redo" /></button>
        <button aria-label="redo list" className="flex w-[13px] items-center justify-center"><Caret size={6} className="text-[#8b9097]" /></button>
        <button aria-label="customize" className="flex w-[18px] flex-col items-center justify-center gap-0.5">
          <span className="h-px w-2 bg-[#d9dadb]" />
          <Caret />
        </button>
        <button className="flex items-center gap-[5px] pl-[2px] text-[12px] text-[#83c8fd]">
          <Icon name="plane" />
          共享
        </button>
      </div>
      <div className="absolute left-[542px] flex gap-5 text-[12px] text-[#eceded] whitespace-pre">
        <span>Autodesk AutoCAD 2025</span>
        <span>某厂区框架办公楼结构设计图.dwg</span>
      </div>
      <div className="ml-auto flex items-center">
        <span className="mr-[7px] h-0 w-0 border-y-4 border-l-4 border-y-transparent border-l-[#d9dadb]" />
        <input aria-label="搜索" placeholder="键入关键字或短语" className="h-5 w-[178px] bg-[#454e60] px-[3px] text-[12px] italic text-white outline-none placeholder:text-[#b4bac4]" />
        <button aria-label="search" className="ml-[5px]"><Icon name="search" /></button>
        <button className="ml-2 flex items-center gap-1 text-[12px] text-[#eceded]"><Icon name="user" />登录</button>
        <button aria-label="account list" className="ml-[60px]"><Caret size={6} /></button>
        <button aria-label="cart" className="ml-3"><Icon name="cart" size={14} /></button>
        <button aria-label="autodesk" className="ml-[9px] flex items-center gap-[6px]"><Icon name="autodesk" /><Caret size={6} /></button>
        <span className="ml-[9px] h-[18px] w-px bg-[#454e60]" />
        <button aria-label="help" className="ml-[9px] flex items-center gap-[6px]"><Icon name="help" /><Caret size={6} /></button>
        <button aria-label="minimize" className="ml-[80px]"><Icon name="min" /></button>
        <button aria-label="maximize" className="ml-[30px]"><Icon name="max" /></button>
        <button aria-label="close" className="ml-[30px] mr-[15px]"><Icon name="close" /></button>
      </div>
    </div>
  );
}

const menus = ["文件(F)", "编辑(E)", "视图(V)", "插入(I)", "格式(O)", "工具(T)", "绘图(D)", "标注(N)", "修改(M)", "参数(P)", "窗口(W)", "帮助(H)", "Express"];

function MenuBar() {
  return (
    <nav className="flex h-[22px] items-center border-b border-[#3b4453] pl-[5px] pr-[11px] pt-0.5 text-[12px] text-[#aeb3ba]">
      {menus.map((m) => (
        <button key={m} className="pl-3 pr-[13px]">{m}</button>
      ))}
      <button aria-label="minimize drawing" className="ml-auto"><Icon name="min" /></button>
      <button aria-label="restore drawing" className="ml-4"><Icon name="restore" /></button>
      <button aria-label="close drawing" className="ml-4"><Icon name="close" /></button>
    </nav>
  );
}

function Slash() {
  return (
    <svg viewBox="0 0 8 18" width="8" height="18" className="shrink-0" aria-hidden="true">
      <path d="M7 1L1 17" stroke="#4a5363" strokeWidth="1.500" />
    </svg>
  );
}

function FileTabs() {
  return (
    <div className="flex h-[26px] items-end pl-[19px] text-[12px]">
      <button aria-label="tab menu" className="flex h-6 items-center"><Icon name="menu" /></button>
      <div className="ml-[10px] flex h-6 items-center"><Slash /></div>
      <button className="ml-2 h-6 pt-0.5 text-[#eceded]">开始</button>
      <div className="ml-[6px] flex h-6 w-[208px] items-center bg-[#3b4453] pl-[17px] [clip-path:polygon(10px_0,100%_0,calc(100%-9px)_100%,0_100%)]">
        <button className="pt-0.5 font-semibold text-white whitespace-nowrap">某厂区框架办公楼结构设计图*</button>
        <button aria-label="close tab" className="ml-auto mr-[8px]"><Icon name="closeTab" size={14} /></button>
      </div>
      <button aria-label="new tab" className="ml-[9px] flex h-6 items-center"><Icon name="plus" size={14} /></button>
      <div className="ml-[10px] flex h-6 items-center"><Slash /></div>
    </div>
  );
}

/* ---------- toolbars ---------- */

function LayerIcons() {
  return (
    <svg viewBox="0 0 90 18" width="90" height="18" aria-hidden="true">
      <circle cx="7" cy="6" r="5" fill="#ffab00" />
      <path d="M4.500 9h5v3h-5z" fill="#ffab00" />
      <path d="M5 12h4v3H5z" fill="#777" />
      <circle cx="24" cy="8.500" r="4" fill="#ffab00" />
      <path d="M24 1v3M24 13v3M16.500 8.500h3M28.500 8.500h3M18.500 3l2 2M27.500 12l2 2M29.500 3l-2 2M20.500 12l-2 2" stroke="#ffab00" strokeWidth="1.500" />
      <path d="M38 5V1.500h3M48 1.500h3V5M38 11v3.500h3" stroke="#555" fill="none" />
      <path d="M40.500 3.500h8v8h-8z" stroke="#555" fill="none" />
      <circle cx="49" cy="12" r="3" fill="#ffab00" />
      <path d="M49 7v10M44 12h10M45.500 8.500l7 7M52.500 8.500l-7 7" stroke="#ffab00" />
      <path d="M58 7h11v8H58z" fill="#ffab00" />
      <path d="M66 7V4a2.500 2.500 0 0 1 5 0v2" stroke="#ffab00" strokeWidth="2" fill="none" />
      <path d="M62.500 9.500h2v3h-2z" fill="#fff" />
      <path d="M76.500 2.500h12v12h-12z" fill="#fff" stroke="#333" />
    </svg>
  );
}

function Toolbars() {
  return (
    <div className="flex flex-col gap-[3px] py-1 pl-px">
      <div className="flex gap-0.5">
        <Bar>
          <Grip />
          <Tools list="new open save | print preview publish dwf | cut copy paste match blockEdit | undo v redo v | pan zoomRt zoomWin zoomPrev | props dcenter palettes sheets markup calc | help" />
        </Bar>
        <Bar>
          <Grip />
          <Tools list="layerProps" />
          <Combo label="图层" value="0" className="w-[301px]" pad="pl-[97px]" sample={<LayerIcons />} />
          <Tools list="layerCur layerPrev layerStates" />
        </Bar>
        <Bar>
          <Grip />
          <Combo label="颜色" value="ByLayer" className="w-[150px]" pad="pl-5" sample={<span className="h-[14px] w-[14px] border border-[#333] bg-white" />} />
          <Tools list="|" />
          <Combo label="线型" value="ByLayer" className="w-[160px]" pad="pl-[69px]" sample={<span className="h-px w-[60px] bg-black" />} />
          <Tools list="|" />
          <Combo label="线宽" value="ByLayer" className="w-[125px]" pad="pl-11" sample={<span className="h-px w-[35px] bg-black" />} />
          <Tools list="|" />
          <Combo label="打印样式" value="ByColor" className="w-[119px]" pad="pl-[9px]" muted />
        </Bar>
      </div>
      <div className="flex gap-0.5">
        <Bar className="pr-px">
          <Grip />
          <Tools list="dLinear dAligned dArc dOrd | dRadius dJog dDia dAng | dQuick dBase dCont dSpace dBreak | tol center inspect jogline | dEdit dText dUpdate |" />
          <Combo label="标注样式" value="Standard" className="w-[120px]" pad="pl-[18px]" />
          <Tools list="dStyle" />
        </Bar>
        <Bar>
          <Grip />
          <Tools list="union subtract intersect | extrude moveF offsetF deleteF rotateF taperF copyF colorF | filletE chamferE copyE colorE | imprint clean separate shell check" />
        </Bar>
      </div>
      <div className="flex">
        <Bar>
          <Grip />
          <Tools list="attEdit attSync layerBook" />
        </Bar>
      </div>
    </div>
  );
}

/* ---------- drawing ---------- */

const RED = "#e60000";
const DARK = "#b00000";
const CYAN = "#00e5e5";

const D1 = "Φ8@200(2)";
const D2 = "2Φ18;2Φ18";
const LV = "(+0.100)";

type Note = { x: number; y: number; to: number; lines: string[]; level?: boolean };
const flat: Note[] = [
  { x: 581, y: 353, to: 381, lines: ["JLL10 240x550", D1, D2] },
  { x: 1095, y: 353, to: 381, lines: ["JLL7(6) 240x550", D1, D2] },
  { x: 318, y: 467, to: 491, lines: ["JLL1 240x550", D1, D2], level: true },
  { x: 318, y: 588, to: 601, lines: ["JLL1 240x550"], level: true },
  { x: 581, y: 684, to: 713, lines: ["JLL6(6) 240x550", D1, D2] },
  { x: 1095, y: 684, to: 713, lines: ["JLL1(6) 240x550", D1, D2] },
  { x: 819, y: 477, to: 491, lines: ["JLL2 240x400"], level: true },
  { x: 1492, y: 463, to: 491, lines: ["JLL5(3) 240x650", D1, D2], level: true },
  { x: 1442, y: 608, to: 636, lines: ["JLL9(2) 240x400", D1, D2], level: true },
];
const upright: Note[] = [
  { x: 733, y: 418, to: 757, lines: ["JLL2 240x400", D1, D2], level: true },
  { x: 789, y: 418, to: 804, lines: ["JLL2 240x400"], level: true },
  { x: 835, y: 421, to: 861, lines: ["JLL3 240x550", D1, D2] },
  { x: 1467, y: 425, to: 1482, lines: ["JLL2 240x400"], level: true },
  { x: 1458, y: 551, to: 1487, lines: ["JLL8 240x550", D1, D2], level: true },
  { x: 1406, y: 675, to: 1434, lines: ["JLL4 240x650", D1, D2], level: true },
  { x: 1472, y: 674, to: 1487, lines: ["JLL4 240x650"], level: true },
  { x: 1524, y: 675, to: 1539, lines: ["JLL4 240x650"] },
];

function NoteText({ lines, level }: { lines: string[]; level?: boolean }) {
  const all = level ? [...lines, LV] : lines;
  return (
    <>
      {all.map((t, i) => {
        const ink = level && i === lines.length ? "#ffffff" : "#f4f400";
        return (
          <text key={i} x="1" y={5 + i * 5} fill={ink} stroke={ink} strokeWidth="0.300">
            {t}
          </text>
        );
      })}
    </>
  );
}

const cols = [282.5, 377.5, 472.5, 567.5, 661.5, 756.5, 860.5, 865.5, 960.5, 1055.5, 1150.5, 1244.5, 1339.5, 1434.5, 1538.5];
const columnX = [284, 377, 472, 567, 662, 756, 860, 867, 960, 1055, 1150, 1245, 1340, 1434, 1538];
const columnY = [382, 492, 602, 712];

const tags: [number, number, number][] = [
  [403, 917, 0], [403, 924, 0], [393, 911, -90], [401, 911, -90],
  [407, 1011, 0], [407, 1018, 0], [395, 1048, -90], [403, 1048, -90],
  [459, 1028, 0], [459, 1035, 0], [445, 1067, -90], [452, 1067, -90],
];

function Drawing() {
  return (
    <svg viewBox="33 165 1638 1126" preserveAspectRatio="xMidYMid slice" className="absolute inset-0 h-full w-full" role="img" aria-label="基础梁配筋平面图">
      {/* view cube ring sits under the sheet frames */}
      <circle cx="1588" cy="247" r="53.500" fill="none" stroke="#2c2c2c" strokeWidth="13" />

      <g fill="none" stroke={CYAN}>
        <path d="M170.500 165V1291M170 187.500H1633M170 1219.500H1633M1632.500 165V1291" />
        <path d="M213.500 160V169.500H1614.500V160M213.500 204.500H1614.500V1202H213.500zM213.500 1300V1237H1614.500V1300" stroke="#00ffff" strokeWidth="2.500" />
      </g>

      {/* axis grid */}
      <g fill="none" stroke={RED}>
        {cols.map((x) => (
          <path key={x} d={`M${x} 365V729`} />
        ))}
        <path d="M266 381.500H1555M266 602.500H1555M1487.500 482V729M1420 635.500H1555" />
        <path d="M266 491.500H1555M266 713.500H1555M804.500 365V492M1482.500 365V492" stroke={DARK} strokeWidth="1.500" />
      </g>

      {/* beams */}
      <g fill="none">
        <path d="M284 711H1434M284 715.500H1434" stroke="#8d8d8d" strokeWidth="2" />
        <path d="M284 713.500H1434" stroke="#8a2020" />
        <path d="M287 489.500H374M287 493.500H374M287 600.500H374M287 604.500H374" stroke="#8d8d8d" strokeWidth="1.500" />
        <path d="M756 436.500H805M756 491.500H805M1434 436.500H1483M1434 491.500H1483M756.500 434V493M804.500 434V493M1434.500 434V493M1482.500 434V493" stroke="#ff00ff" strokeWidth="5" strokeDasharray="2 1" />
        <path d="M756.500 491V436.500H804.500V491M1434.500 491V436.500H1482.500V491" stroke="#ff0050" />
        <path d="M1437 382H1536M1437 602.500H1536M1434.500 385V434M1434.500 494V600M1539 385V600" stroke="#ff0000" strokeWidth="5" strokeDasharray="1 2" />
        <path d="M1434.500 385V600M1539 385V600M1437 381.500H1536M1437 602.500H1536" stroke="#ff0000" strokeWidth="1.500" />
        <path d="M754 434.500h4M802 434.500h4M1432 434.500h4M1480 434.500h4M1436.500 633v5M1537.500 633v5" stroke="#ddd" />
      </g>

      {/* columns */}
      <g fill="none" stroke="#0b8c10" strokeWidth="1.700">
        {columnY.flatMap((y) => columnX.map((x) => <rect key={`${x}-${y}`} x={x - 3.5} y={y - 3.5} width="7" height="7" />))}
        <path d="M802 379h5v7h-5zM1480 379h5v7h-5zM802 487h5v7h-5zM1480 487h5v7h-5zM1484 599h6v7h-6zM1484 709h6v7h-6z" />
      </g>

      {/* beam marks */}
      <g fontFamily="Liberation Sans, Arial, sans-serif" fontSize="6">
        {flat.map((n) => (
          <g key={`${n.x}-${n.y}`} transform={`translate(${n.x} ${n.y})`}>
            <path d={`M.5 0V${n.to - n.y}`} stroke="#b8b800" />
            <NoteText lines={n.lines} level={n.level} />
          </g>
        ))}
        {upright.map((n) => (
          <g key={`${n.x}-${n.y}`}>
            <path d={`M${n.x} ${n.y + 0.5}H${n.to}`} stroke="#c8c800" />
            <g transform={`translate(${n.x} ${n.y}) rotate(-90)`}>
              <NoteText lines={n.lines} level={n.level} />
            </g>
          </g>
        ))}
        <path d="M282 548.500H312" stroke="#c8c800" />
        <g transform="translate(312 549) rotate(90)">
          <NoteText lines={["JLL2(2) 240x650", D1, D2]} />
        </g>
      </g>

      {/* stair and lift-shaft detail */}
      <g fill="none" stroke={RED}>
        <path d="M362 886.500H498M362 997.500H498M362 1108.500H498M425.500 871V997M482.500 862V1116M430.500 984V1116M501.500 1063V1116M482 1071.500H505" />
        <path d="M378 887V1140M378 942H426" stroke={DARK} strokeWidth="1.500" />
        <path d="M395 886V942M378 922V918.500H425.500V922M397 997V1108M380 1015V1011.500H431V1015M446.500 997V1108M430 1032V1029H481V1033" stroke="#ff0000" strokeWidth="1.500" />
        <path d="M402 887V942M377 925.500H427M404 997V1108M379 1018.500H430M454 997V1108M430 1036H481" stroke="#8a2a10" strokeWidth="1.500" />
        <path d="M428.500 999V1104M432.500 999V1104" stroke="#b0b0b0" strokeWidth="1.500" />
        <path d="M427 892L480.500 994M480 893L428 996M381 996L389 952.500L424 944" stroke="#e0e0e0" />
      </g>
      <g fill="#fff" stroke="#fff" strokeWidth="0.300" fontFamily="Liberation Sans, Arial, sans-serif" fontSize="5">
        {tags.map(([x, y, r]) => (
          <text key={`${x}-${y}`} transform={`translate(${x} ${y}) rotate(${r})`}>Φ10@150</text>
        ))}
      </g>

      {/* drawing title and notes */}
      <g fill="#cfcf00" fontFamily="Liberation Sans, Noto Sans CJK SC, sans-serif" fontSize="8">
        <text x="437" y="924" fontSize="10">1#楼梯</text>
        <text x="385" y="969" fontSize="9">电梯井</text>
        <text x="851" y="963" fontSize="16">基础梁配筋平面图</text>
        <text x="983" y="963" fontSize="12">1:100</text>
        <g stroke="#cfcf00" strokeWidth="0.200">
          <text x="847" y="984">1:梁面结构标高-0.150m，梁砼强度等级C30。</text>
          <text x="847" y="999">2:主次梁相交处,主梁附加每侧附加4@50箍筋,箍筋直径与主梁箍筋相同。</text>
          <text x="855" y="1013">地梁钢筋全部焊接</text>
          <text x="853" y="1028">基础底梁迎水面混凝土保护层厚度40mm</text>
          <text x="853" y="1042">基础梁混凝土采用防水混凝土,抗渗等级S6.</text>
        </g>
      </g>
      <path d="M847 969H1016" stroke="#fff" strokeWidth="2" />
      <path d="M847 972.500H1016" stroke="#e8e8e8" />

      {/* view cube */}
      <path d="M1562 221h52v52h-52z" fill="#a6a6a6" />
      <path d="M1572 231h32v32h-32z" fill="#989a9e" />
      <path d="M1614.500 218V276" stroke="#00ffff" strokeWidth="2.500" />
      <g fontFamily="Noto Sans CJK SC, sans-serif" fontSize="19" fill="#a8a8a8" textAnchor="middle">
        <text x="1588" y="199">北</text>
        <text x="1531" y="255">西</text>
        <text x="1644" y="255">东</text>
        <text x="1588" y="312">南</text>
        <text x="1588" y="258" fontSize="30" fill="#55575b">上</text>
      </g>

      {/* user coordinate system mark */}
      <path d="M59.500 1214V1264.500H110M55.500 1259.500h9v9h-9z" fill="none" stroke="#e4e4e4" />
      <g fill="#dcdcdc" fontFamily="Liberation Sans, Arial, sans-serif" fontSize="19" textAnchor="middle">
        <text x="67" y="1210">Y</text>
        <text x="120" y="1263">X</text>
      </g>

      {/* crosshair */}
      <path d="M33 1211.500H1627M1640 1211.500H1671M1633.500 165V1205M1633.500 1218V1291" stroke="#e8e8e8" />
      <path d="M1627.500 1205.500h12v12h-12z" fill="none" stroke="#fff" />
    </svg>
  );
}

function Mono({ text }: { text: string }) {
  return (
    <>
      {text.split(/([\u4e00-\u9fff]+)/).map((p, i) => (
        <span key={i} className={i % 2 ? "text-[13px]" : "text-[12px]"}>{p}</span>
      ))}
    </>
  );
}

function CommandLine() {
  const chip = "flex h-[15px] w-fit items-center rounded-sm px-px whitespace-pre leading-none";
  return (
    <div className="absolute bottom-px left-1/2 w-[518px] -translate-x-1/2 font-['Liberation_Mono','Noto_Sans_CJK_SC',monospace]">
      <div className="mb-[2px] ml-16 flex flex-col gap-[5px]">
        <div className={`${chip} bg-[#5a5a5a]/85 text-[#a8a8a8]`}><Mono text="命令: _textedit" /></div>
        <div className={`${chip} bg-[#5f5f5f]/85 text-[#cfcfcf]`}><Mono text="当前设置: 编辑模式 = Multiple" /></div>
        <div className={`${chip} bg-[#646464] text-[#f0f0f0]`}><Mono text="选择注释对象或 [放弃(U)/模式(M)]: *取消*" /></div>
      </div>
      <div className="flex h-[26px] items-center rounded-sm bg-[#222933]">
        <div className="ml-1 h-[18px] w-[5px] bg-[radial-gradient(#a5a8ad_1px,transparent_1px)] [background-size:3px_3px]" />
        <button aria-label="close command line" className="ml-1"><Icon name="closeTab" size={15} /></button>
        <button aria-label="customize command line" className="ml-[9px] mr-[6px]"><Icon name="wrench" size={15} /></button>
        <div className="flex h-[25px] flex-1 items-center rounded-r-sm bg-[#b0b0b0] pl-1">
          <button aria-label="recent commands" className="flex items-center gap-[2px]"><Icon name="prompt" /><Caret className="text-[#3f4248]" /></button>
          <input aria-label="命令" placeholder="键入命令" className="ml-[6px] w-full min-w-0 flex-1 bg-transparent text-[13px] italic text-black outline-none placeholder:text-[#55585e]" />
          <button aria-label="command history" className="mr-[3px] rotate-180"><Caret className="text-[#3f4248]" /></button>
        </div>
      </div>
    </div>
  );
}

/* ---------- bottom bars ---------- */

function LayoutTabs() {
  return (
    <div className="flex h-6 items-center pl-[19px] text-[12px] text-[#eceded]">
      <button aria-label="layout menu"><Icon name="menu" /></button>
      <button className="ml-[9px] h-6 w-[58px] bg-[#3b4453] font-semibold [clip-path:polygon(10px_0,100%_0,calc(100%-10px)_100%,0_100%)]">模型</button>
      <button className="ml-[7px] mr-[8px]">布局1</button>
      <Slash />
      <button aria-label="new layout" className="mx-[10px]"><Icon name="plus" size={14} /></button>
      <Slash />
    </div>
  );
}

type Item = { n: string; on?: boolean; v?: boolean; w: string };

function StatusGroup({ items, className = "" }: { items: Item[]; className?: string }) {
  return (
    <div className={`flex h-6 shrink-0 items-center bg-[#3b4453] ${className}`}>
      {items.map((it) => (
        <React.Fragment key={it.n}>
          <button aria-label={it.n} className={`flex h-[22px] shrink-0 items-center justify-center ${it.on ? "bg-[#5f8dc3]" : ""} ${it.w}`}>
            <Icon name={it.n} />
          </button>
          {it.v && (
            <button aria-label={`${it.n} list`} className="flex h-6 w-4 shrink-0 items-center justify-center"><Caret /></button>
          )}
        </React.Fragment>
      ))}
    </div>
  );
}

function StatusBar() {
  return (
    <footer className="flex h-6 items-center gap-[3px] pl-[5px] pr-[5px] text-[12px] text-[#eceded]">
      <div className="h-6 min-w-0 flex-1 bg-[#3b4453]" />
      <div className="ml-px flex h-6 w-[210px] shrink-0 items-center justify-end bg-[#3b4453] pr-[5px] whitespace-nowrap">-15154.3962, 107283.4763, 0.0000</div>
      <button className="h-6 w-[30px] shrink-0 bg-[#3b4453]">模型</button>
      <StatusGroup items={[{ n: "grid", w: "w-6" }, { n: "dots", w: "w-6", v: true }]} />
      <div className="flex gap-px">
        <StatusGroup items={[{ n: "infer", w: "w-6" }]} />
        <StatusGroup items={[{ n: "dyn", w: "w-6", on: true }]} />
        <StatusGroup className="pl-px" items={[{ n: "ortho", w: "w-6" }, { n: "polar", w: "w-[23px]", v: true }, { n: "iso", w: "w-6", v: true }]} />
        <StatusGroup items={[{ n: "otrack", w: "w-6" }, { n: "osnap", w: "w-6", on: true, v: true }]} />
        <StatusGroup items={[{ n: "lw", w: "w-6" }]} />
        <StatusGroup items={[{ n: "transp", w: "w-6", on: true }]} />
        <StatusGroup items={[{ n: "selcyc", w: "w-6" }]} />
        <StatusGroup items={[{ n: "osnap3", w: "w-6", v: true }]} />
      </div>
      <StatusGroup items={[{ n: "ducs", w: "w-[23px]", on: true }, { n: "filter", w: "w-6", v: true }, { n: "gizmo", w: "w-[23px]", on: true, v: true }]} />
      <div className="flex h-6 w-[148px] shrink-0 items-center bg-[#3b4453]">
        <StatusGroup items={[{ n: "annoVis", w: "w-6", on: true }, { n: "annoAuto", w: "w-6" }, { n: "annoScale", w: "w-6" }]} />
        <button className="ml-1 flex items-center gap-[3px] whitespace-nowrap">1:1 / 100%<Caret /></button>
      </div>
      <div className="flex gap-px">
        <StatusGroup items={[{ n: "gear", w: "w-6", v: true }]} />
        <StatusGroup items={[{ n: "plus", w: "w-6" }]} />
      </div>
      <div className="flex gap-px">
        <div className="relative flex h-6 w-[98px] shrink-0 items-center bg-[#3b4453] pl-1">
          <Icon name="ruler" />
          <select aria-label="图形单位" className="h-6 w-full appearance-none bg-transparent pl-[9px] text-[12px] outline-none">
            <option>小数</option>
          </select>
          <Caret className="pointer-events-none absolute right-1 text-[#d9dadb]" />
        </div>
        <StatusGroup items={[{ n: "qprops", w: "w-6" }]} />
      </div>
      <div className="flex gap-px">
        <StatusGroup items={[{ n: "lockui", w: "w-6", v: true }]} />
        <StatusGroup items={[{ n: "isolate", w: "w-6" }]} />
      </div>
      <StatusGroup items={[{ n: "perf", w: "w-6", on: true }]} />
      <StatusGroup items={[{ n: "cadcheck", w: "w-7" }, { n: "trend", w: "w-7" }]} />
      <div className="flex gap-0.5">
        <StatusGroup items={[{ n: "fullscreen", w: "w-6" }]} />
        <StatusGroup items={[{ n: "menu", w: "w-6" }]} />
      </div>
    </footer>
  );
}

export default function App() {
  return (
    <div className="flex min-h-screen flex-col overflow-hidden rounded-lg border border-[#0f8fdc] bg-[#222933] pb-[5px] font-['Noto_Sans','Noto_Sans_CJK_SC',sans-serif] antialiased">
      <header>
        <TitleBar />
        <MenuBar />
        <FileTabs />
      </header>
      <div className="mx-[3px] flex flex-1 flex-col bg-[#3b4453] pb-1">
        <Toolbars />
        <div className="flex flex-1 gap-1">
          <aside className="w-[25px]">
            <VerticalBar list="line xline pline polygon rect arc circle cloud spline ellipse earc insert block point hatch gradient region table textA addsel" />
          </aside>
          <main className="relative min-w-0 flex-1 overflow-hidden bg-black">
            <Drawing />
            <button className="absolute right-[59px] top-[169px] flex h-[18px] w-12 items-center justify-between rounded border border-[#77777f] bg-[#8b8b94] px-[3px] text-[11px] leading-none text-[#3c3c44]">
              WCS
              <Caret className="text-[#a9a9b2]" />
            </button>
            <CommandLine />
          </main>
          <aside className="w-7">
            <VerticalBar list="erase copyO mirror offset array move rotate scale stretch trim extend breakPt break join chamfer fillet blend explode" />
          </aside>
        </div>
      </div>
      <div className="mb-[6px]">
        <LayoutTabs />
      </div>
      <StatusBar />
    </div>
  );
}
